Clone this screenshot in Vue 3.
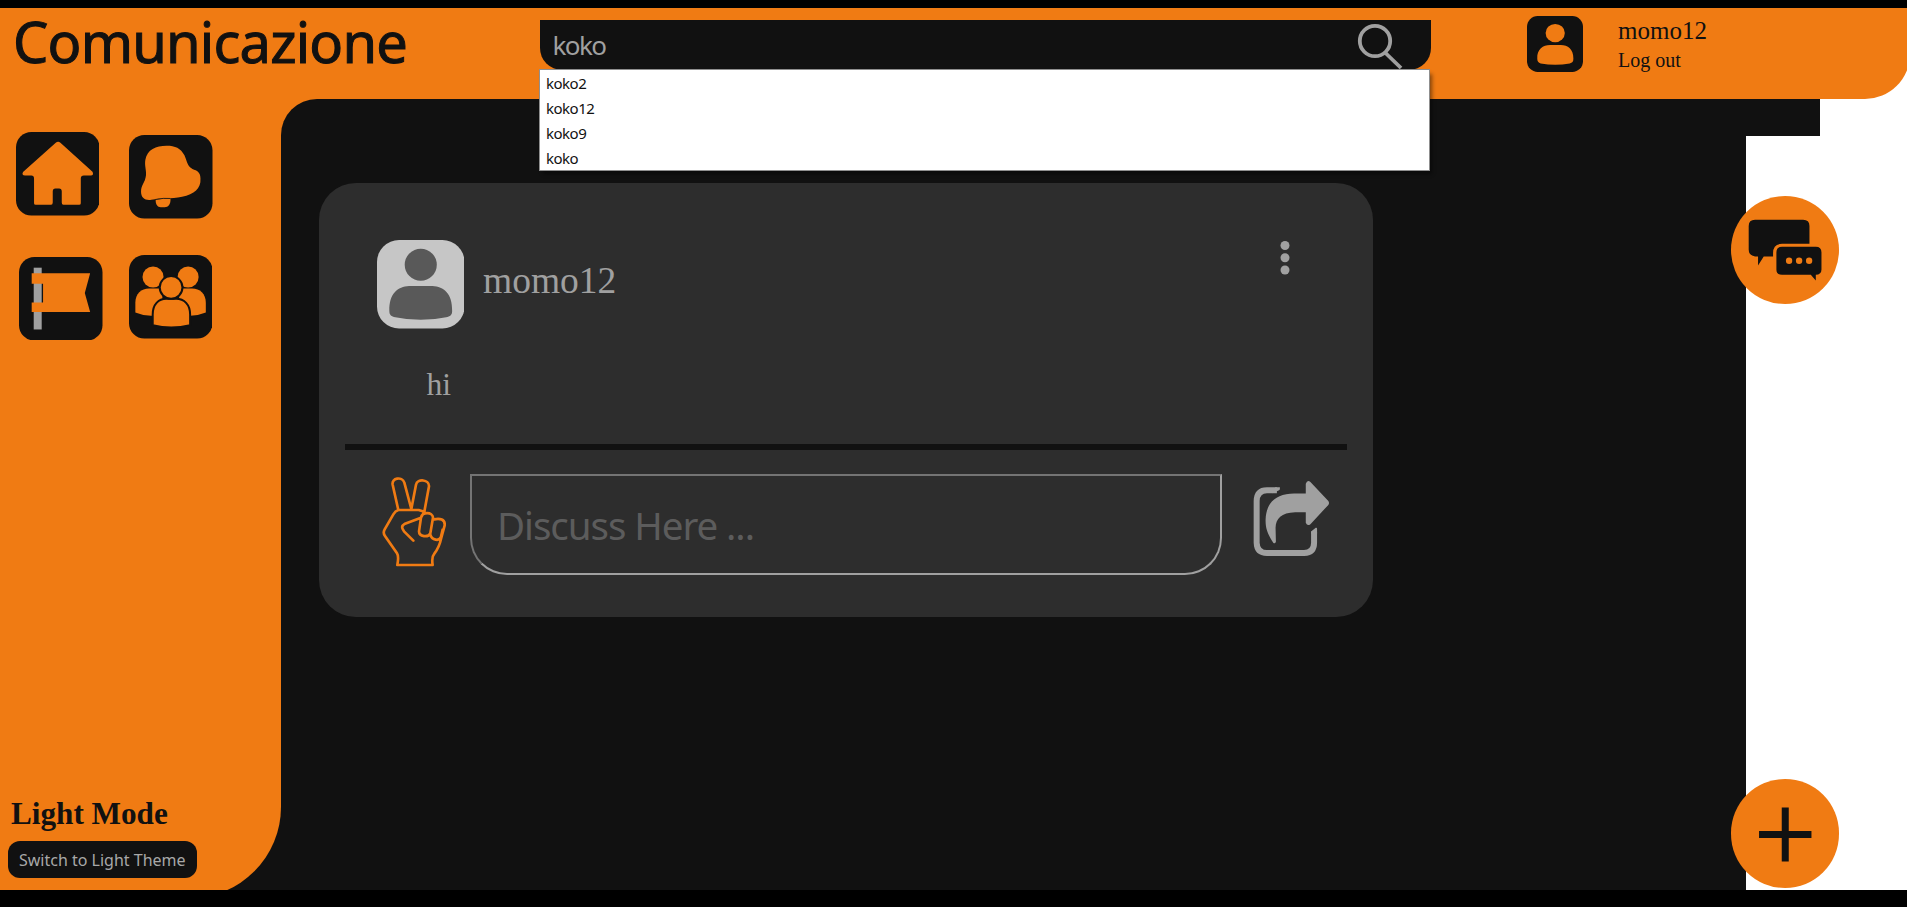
<script setup>
import { ref } from 'vue'

const query = ref('koko')
const suggestions = ['koko2', 'koko12', 'koko9', 'koko']
const user = 'momo12'
const comment = ref('')
</script>

<template>
  <div class="page">
    <header class="header">
      <div class="logo">Comunicazione</div>
      <div class="search">
        <div class="search-bar">
          <span class="search-text">{{ query }}</span>
          <svg class="lens" viewBox="0 0 48 48">
            <circle cx="18" cy="19" r="15.2" />
            <path d="M28.5 31L44 46" />
          </svg>
        </div>
        <ul class="suggestions">
          <li v-for="s in suggestions" :key="s">{{ s }}</li>
        </ul>
      </div>
      <svg class="user-icon" viewBox="0 0 262 262">
        <rect width="262" height="262" rx="50" fill="#111" />
        <ellipse cx="132" cy="80" rx="45" ry="43" fill="#f07b13" />
        <path d="M48 200C46 155 75 136 108 136H158C191 136 218 155 217 200C217 214 212 219 200 222Q132 234 64 222C53 219 48 212 48 200Z" fill="#f07b13" />
      </svg>
      <div class="account">
        <span class="account-name">{{ user }}</span>
        <span class="logout">Log out</span>
      </div>
    </header>

    <div class="body">
      <aside class="side-wrap">
        <div class="sidebar">
          <nav class="nav">
            <svg class="nav-icon home" viewBox="0 0 250 250">
              <rect width="250" height="250" rx="46" fill="#111" />
              <path d="M119 32Q126 26 133 32L229 119Q234 130 224 130H203Q194 130 194 139V213Q194 218 189 218H142Q137 218 137 211V178Q137 169 129 169H118Q110 169 110 178V211Q110 218 105 218H59Q54 218 54 213V139Q54 130 46 130H27Q16 130 21 120Z" fill="#f07b13" />
            </svg>
            <svg class="nav-icon bell" viewBox="0 0 250 250">
              <rect width="250" height="250" rx="46" fill="#111" />
              <path d="M113 32C138 32 155 39 166 61C174 79 174 94 190 102C204 107 214 112 214 130C216 161 195 176 159 185C125 193 96 188 67 194C48 197 36 188 36 170C36 149 48 145 51 120C52 104 46 91 49 74C55 43 80 32 113 32Z" fill="#f07b13" />
              <path d="M80 193L124 189C126 207 117 216 107 216H95C85 216 79 207 80 193Z" fill="#f07b13" />
              <path d="M79 193Q104 188 124 190" fill="none" stroke="#111" stroke-width="2.5" />
            </svg>
            <svg class="nav-icon flag" viewBox="0 0 250 250">
              <rect width="250" height="250" rx="46" fill="#111" />
              <path d="M44 32H68V217H44Z" fill="#a0a0a0" />
              <path d="M38 49H213L197 108L213 165H38V136H72V80H38Z" fill="#f07b13" />
            </svg>
            <svg class="nav-icon group" viewBox="0 0 250 250">
              <rect width="250" height="250" rx="46" fill="#111" />
              <g fill="#f07b13">
                <circle cx="72" cy="66" r="31.500" />
                <circle cx="177" cy="66" r="31.500" />
                <path d="M19 172V143C19 115 37 100 60 100H100V182H66Q40 181 19 172Z" />
                <path d="M230 172V143C230 115 212 100 189 100H150V182H184Q208 181 230 172Z" />
                <g stroke="#111" stroke-width="6">
                  <path d="M71 210V178C71 148 88 131 112 131H141C165 131 183 148 183 178V210Q126 224 71 210Z" />
                  <circle cx="126" cy="97" r="34" />
                </g>
              </g>
            </svg>
          </nav>
          <div class="theme">
            <h2>Light Mode</h2>
            <button type="button">Switch to Light Theme</button>
          </div>
        </div>
      </aside>

      <div class="main-wrap">
        <main class="main">
          <article class="card">
            <div class="post-head">
              <svg class="avatar" viewBox="0 0 262 265">
                <rect width="262" height="265" rx="66" fill="#c6c6c6" />
                <circle cx="131" cy="74" r="48" fill="#595959" />
                <path d="M37 213C36 160 62 140 96 138H166C200 140 226 160 225 213C225 224 219 229 207 231Q131 247 55 231C43 229 37 224 37 213Z" fill="#595959" />
              </svg>
              <span class="author">{{ user }}</span>
              <svg class="dots" viewBox="0 0 10 36">
                <circle cx="5" cy="5.500" r="4.500" />
                <circle cx="5" cy="17.800" r="4.500" />
                <circle cx="5" cy="30" r="4.500" />
              </svg>
            </div>
            <p class="post-text">hi</p>
            <div class="divider"></div>
            <div class="post-actions">
              <svg class="peace" viewBox="186 140 192 270">
                <path d="M235 239L218 163C214 143 246 137 253 157L274 236L288 163C292 144 328 147 327 168L313 244M235 239H296L313 244M235 239Q226 242 220 252L194 297Q188 308 195 317L231 369Q237 378 232 404H338Q334 380 343 370Q358 350 363 326L374 285C376 267 359 263 343 267M303 262L255 280C243 287 245 293 252 303L280 331M303 262C306 244 338 244 339 262L331 309C325 322 297 320 297 303ZM303 262L313 244M331 313C335 330 359 334 363 319L368 298" />
              </svg>
              <input v-model="comment" type="text" placeholder="Discuss Here ..." />
              <svg class="share" viewBox="218 118 232 232">
                <path d="M290 149H260Q230 149 229 181V307Q230 338 260 338H372Q402 337 402 307V273" fill="none" stroke="#a0a0a0" stroke-width="18" />
                <path d="M276 158L295 150Q299 148 299 144V140H285ZM393 273L407 262Q411 260 411 266V280H393Z" fill="#a0a0a0" />
                <path d="M279 307C263 282 255 264 256 236C258 186 288 159 342 159H377V129Q382 116 391 124L445 181Q449 187 445 193L391 251Q382 258 377 247V215H345C303 216 287 234 286 262L287 304Q284 312 279 307Z" fill="#a0a0a0" />
              </svg>
            </div>
          </article>
        </main>
      </div>
      <div class="notch"></div>

      <button type="button" class="fab chat" aria-label="Messages">
        <svg viewBox="0 0 325 325">
          <path d="M72 71H216Q235 71 235 90V143H153Q126 143 126 171V181H98L81 208V181H72Q53 178 53 160V90Q53 71 72 71Z" fill="#111" />
          <path d="M153 152H254Q271 152 271 169V220Q271 235 254 236V253L239 236H153Q136 236 136 220V169Q136 152 153 152Z" fill="#111" />
          <g fill="#f07b13">
            <circle cx="174" cy="194" r="9.500" />
            <circle cx="204" cy="194" r="9.500" />
            <circle cx="234" cy="194" r="9.500" />
          </g>
        </svg>
      </button>
      <button type="button" class="fab add" aria-label="New post">
        <svg viewBox="0 0 325 325">
          <path d="M84 166H241M162.500 85V247" stroke="#111" stroke-width="21" />
        </svg>
      </button>
    </div>
  </div>
</template>

<style>
html,
body {
  margin: 0;
  overflow: hidden;
  background: #000;
}
</style>

<style scoped>
.page {
  box-sizing: border-box;
  width: 1907px;
  height: 907px;
  border: solid #000;
  border-width: 8px 0 17px;
  background: #fff;
  overflow: hidden;
  display: flex;
  flex-direction: column;
  font-family: 'Liberation Serif', serif;
  color: #111;
}

.header {
  position: relative;
  z-index: 2;
  display: flex;
  align-items: flex-start;
  width: 1910px;
  height: 91px;
  flex: none;
  background: #f07b13;
  border-bottom-right-radius: 45px;
}

.logo {
  width: 527px;
  padding-left: 13px;
  flex: none;
  font: 400 56px/67px 'Noto Sans', sans-serif;
  letter-spacing: -0.8px;
  -webkit-text-stroke: 1px #111;
}

.search {
  position: relative;
  width: 891px;
  margin-top: 12px;
  flex: none;
}

.search-bar {
  display: flex;
  justify-content: space-between;
  height: 50px;
  background: #111;
  border-radius: 0 0 22px 22px;
}

.search-text {
  padding-left: 12.500px;
  font: 26px/51px 'Noto Sans', sans-serif;
  letter-spacing: -1.6px;
  color: #a0a0a0;
}

.lens {
  width: 48px;
  height: 48px;
  margin: 2px 26px 0 0;
  fill: none;
  stroke: #a0a0a0;
  stroke-width: 3.8;
}

.suggestions {
  position: absolute;
  top: 49px;
  left: -1px;
  box-sizing: border-box;
  width: 891px;
  height: 102px;
  margin: 0;
  padding: 1px 0 0 6px;
  list-style: none;
  background: #fff;
  border: 1px solid #8f8f8f;
  box-shadow: 3px 4px 4px -1px rgba(0, 0, 0, 0.45);
  font: 15px/25px 'Noto Sans', sans-serif;
  letter-spacing: -0.5px;
}

.user-icon {
  width: 56px;
  height: 56px;
  margin: 8px 35.500px 0 95.500px;
  flex: none;
}

.account {
  display: flex;
  flex-direction: column;
  margin-top: 9px;
}

.account-name {
  font-size: 25px;
  line-height: 28px;
}

.logout {
  font-size: 20px;
  line-height: 31px;
}

.body {
  position: relative;
  display: flex;
  flex: 1;
  align-items: stretch;
}

.side-wrap {
  width: 281px;
  height: 791px;
  overflow: hidden;
  flex: none;
  background: #111;
}

.sidebar {
  display: flex;
  flex-direction: column;
  justify-content: space-between;
  height: 799px;
  background: #f07b13;
  border-bottom-right-radius: 91px;
}

.nav {
  display: grid;
  grid-template-columns: 113px 84px;
  row-gap: 40px;
  padding: 33px 0 0 15.500px;
}

.nav-icon {
  width: 83.500px;
  height: 83.500px;
}

.bell {
  margin: 3px 0 0 0.500px;
}

.flag {
  margin: -2px 0 0 3.500px;
}

.group {
  margin-top: -3.500px;
}

.theme {
  height: 103px;
  padding-left: 8px;
}

.theme h2 {
  margin: 0 0 8px 3px;
  font-size: 31.200px;
  line-height: 38px;
}

.theme button {
  width: 188.500px;
  height: 37px;
  padding: 2px 0 0;
  border: 0;
  border-radius: 12px;
  background: #111;
  color: #a8a8a8;
  font: 16px/35px 'Noto Sans', sans-serif;
  white-space: nowrap;
}

.main-wrap {
  width: 1464.500px;
  flex: none;
  background: #f07b13;
}

.main {
  box-sizing: border-box;
  height: 100%;
  padding: 84px 0 0 37.500px;
  background: #111;
  border-top-left-radius: 36px;
}

.notch {
  width: 74px;
  height: 37px;
  background: #111;
}

.card {
  box-sizing: border-box;
  width: 1054.500px;
  height: 434px;
  padding: 57px 26.500px 0;
  border-radius: 37px;
  background: #2d2d2d;
  color: #a0a0a0;
}

.post-head {
  display: flex;
  align-items: flex-start;
  height: 122px;
  padding: 0 56.500px 0 31.500px;
}

.avatar {
  width: 87.500px;
  height: 88.500px;
}

.author {
  margin-left: 19px;
  font-size: 37.500px;
  line-height: 82px;
}

.dots {
  width: 10px;
  height: 36px;
  margin: -0.500px 0 0 auto;
  fill: #a0a0a0;
}

.post-text {
  height: 82px;
  margin: 0 0 0 81.500px;
  font-size: 31.500px;
  line-height: 45px;
}

.divider {
  height: 6px;
  background: #111;
}

.post-actions {
  display: flex;
  align-items: flex-start;
  padding: 24px 17px 0 36.500px;
}

.peace {
  width: 64px;
  height: 90px;
  margin-top: 2.500px;
  fill: none;
  stroke: #f07b13;
  stroke-width: 8;
  stroke-linejoin: round;
  stroke-linecap: round;
}

.post-actions input {
  box-sizing: border-box;
  width: 752px;
  height: 101px;
  margin-left: 24px;
  padding: 0 0 0 25.500px;
  border: 2px solid;
  border-color: #747474 #a0a0a0 #a0a0a0 #747474;
  border-radius: 0 0 37px 37px;
  background: transparent;
  outline: none;
  color: #a0a0a0;
  font: 38.500px 'Noto Sans', sans-serif;
  letter-spacing: -1.050px;
}

.post-actions input::placeholder {
  color: #5c5c5c;
  opacity: 1;
}

.share {
  width: 77px;
  height: 77px;
  margin: 5.500px 0 0 31px;
}

.fab {
  position: absolute;
  left: 1730.500px;
  width: 108.500px;
  height: 108.500px;
  padding: 0;
  border: 0;
  border-radius: 50%;
  background: #f07b13;
}

.fab svg {
  display: block;
  width: 100%;
  height: 100%;
}

.chat {
  top: 96.500px;
}

.add {
  top: 680px;
}
</style>
